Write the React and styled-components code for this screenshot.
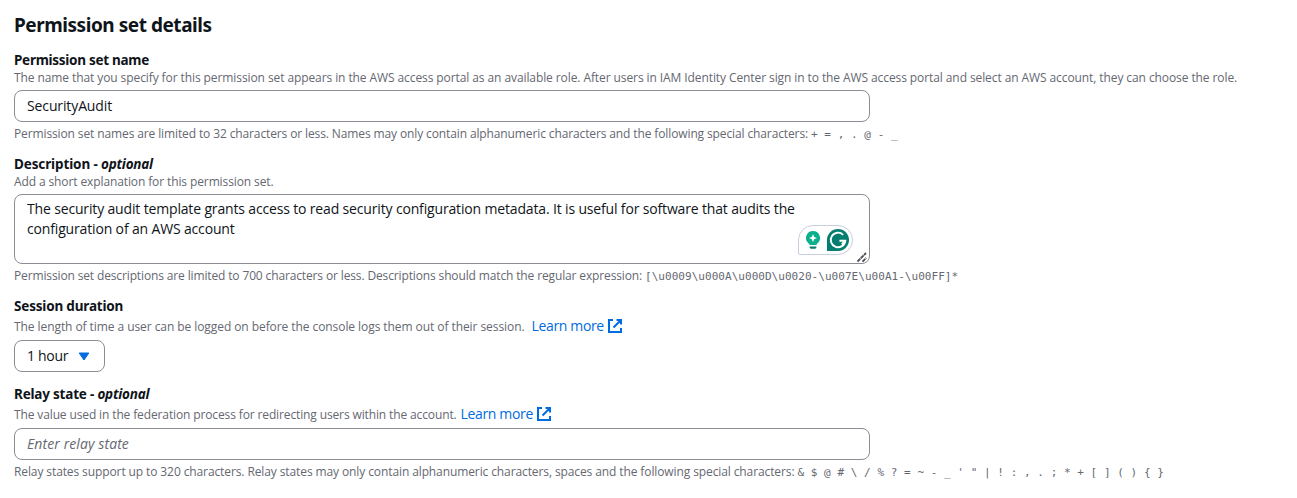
import React from 'react';
import styled, { createGlobalStyle } from 'styled-components';

const GlobalStyle = createGlobalStyle`
  *, *::before, *::after { box-sizing: border-box; }
  body {
    margin: 0;
    background: #fff;
    color: #0f141a;
    font-family: 'Open Sans', 'Noto Sans', sans-serif;
    font-size: 14px;
    line-height: 20px;
    overflow: hidden;
  }
`;

const Panel = styled.main`
  display: flex;
  flex-direction: column;
  gap: 12px;
  padding: 13px 14px 0;
  white-space: nowrap;
`;

const Heading = styled.h2`
  margin: 0;
  height: 25px;
  font: 700 19px/24px 'Noto Sans', sans-serif;
  letter-spacing: -0.46px;
`;

const Field = styled.section`
  display: flex;
  flex-direction: column;
  align-items: flex-start;
`;

const Label = styled.label`
  font: 700 13.5px/20px 'Noto Sans', sans-serif;
  letter-spacing: ${(p) => p.$track}px;
  white-space: pre;
`;

const Optional = styled.em`
  letter-spacing: -0.22px;
`;

const Hint = styled.div`
  display: flex;
  align-items: baseline;
  height: ${(p) => (p.$tall ? 20 : 16)}px;
  font-size: 12px;
  line-height: ${(p) => (p.$tall ? 20 : 16)}px;
  letter-spacing: ${(p) => p.$track}px;
  color: #656871;
`;

const Constraint = styled(Hint)`
  margin-top: 4px;
`;

const Code = styled.code`
  margin-left: 3px;
  font-family: 'DejaVu Sans Mono', monospace;
  font-size: 11px;
  letter-spacing: 0.04px;
`;

const Link = styled.a`
  display: inline-flex;
  align-items: baseline;
  margin-left: ${(p) => p.$gap}px;
  font-size: 14px;
  letter-spacing: -0.35px;
  color: #006ce0;
  text-decoration: none;

  svg {
    align-self: center;
    margin-left: 4px;
  }
`;

const Input = styled.input`
  width: 856px;
  height: 32px;
  margin-top: 4px;
  padding: 0 12px 2px;
  border: 1px solid #8c8c94;
  border-radius: 8px;
  outline: none;
  background: #fff;
  color: #0f141a;
  font: 14px/20px 'Open Sans', sans-serif;
  letter-spacing: -0.12px;

  &::placeholder {
    color: #656871;
    opacity: 1;
    font-style: italic;
    letter-spacing: 0.1px;
  }
`;

const AreaFrame = styled.div`
  position: relative;
  width: 856px;
  height: 70px;
  margin-top: 4px;
`;

const TextArea = styled.textarea`
  display: block;
  width: 100%;
  height: 100%;
  padding: 4px 12px;
  border: 1px solid #8c8c94;
  border-radius: 8px;
  outline: none;
  resize: none;
  overflow: hidden;
  background: #fff;
  color: #0f141a;
  font: 14px/20px 'Open Sans', sans-serif;
  letter-spacing: -0.157px;
`;

const Assistant = styled.div`
  position: absolute;
  right: 17px;
  bottom: 9px;
  display: flex;
  align-items: center;
  gap: 6px;
  width: 55px;
  height: 30px;
  padding-left: 6px;
  border: 1px solid #c9cedd;
  border-radius: 15px 15px 15px 2px;
  background: #fff;
`;

const Grip = styled.svg`
  position: absolute;
  right: 2px;
  bottom: 1px;
`;

const Select = styled.button`
  display: flex;
  align-items: center;
  gap: 10px;
  width: 91px;
  height: 32px;
  margin-top: 4px;
  padding: 0 12px;
  border: 1px solid #8c8c94;
  border-radius: 8px;
  background: #fff;
  color: #0f141a;
  font: 14px/20px 'Open Sans', sans-serif;
  letter-spacing: -0.3px;
`;

const ExternalIcon = () => (
  <svg width="14" height="14" viewBox="0 0 14 14" fill="none" stroke="#006ce0" strokeWidth="2">
    <path d="M5 1H1V13H13V9M8.5 1H13V5.5M13 1L5.5 8.5" />
  </svg>
);

const BulbIcon = () => (
  <svg width="16" height="20" viewBox="0 0 16 20">
    <path
      d="M8 1a7 7 0 0 0-4.8 12.1c.8.7 1.2 1.2 1.5 1.9h6.6c.3-.7.7-1.2 1.5-1.9A7 7 0 0 0 8 1Z"
      fill="#0ab08c"
    />
    <path d="M8 4.1 9.2 6.9 12 8.1 9.2 9.3 8 12.1 6.8 9.3 4 8.1 6.8 6.9Z" fill="#fff" />
    <path d="M4.4 16.4h7.2c-.1 1.6-.9 2.4-2.3 2.4H6.7c-1.4 0-2.2-.8-2.3-2.4Z" fill="#087f6e" />
  </svg>
);

const GrammarIcon = () => (
  <svg width="22" height="22" viewBox="0 0 22 22">
    <path d="M11 0a11 11 0 1 1 0 22H0V11A11 11 0 0 1 11 0Z" fill="#027e6f" />
    <path
      d="M16.2 5.8A7.3 7.3 0 1 0 18.3 11.8H12.4M17.7 11.8L15 15.3"
      fill="none"
      stroke="#fff"
      strokeWidth="1.9"
    />
  </svg>
);

const description =
  'The security audit template grants access to read security configuration metadata. It is useful for software that audits the\nconfiguration of an AWS account';

const LearnMore = ({ gap }) => (
  <Link $gap={gap}>
    Learn more
    <ExternalIcon />
  </Link>
);

export default function App() {
  return (
    <>
      <GlobalStyle />
      <Panel>
        <Heading>Permission set details</Heading>

        <Field>
          <Label $track={-0.28}>Permission set name</Label>
          <Hint $track={-0.09}>
            The name that you specify for this permission set appears in the AWS access portal as an available role.
            After users in IAM Identity Center sign in to the AWS access portal and select an AWS account, they can
            choose the role.
          </Hint>
          <Input defaultValue="SecurityAudit" spellCheck={false} />
          <Constraint $track={-0.119}>
            Permission set names are limited to 32 characters or less. Names may only contain alphanumeric characters
            and the following special characters:
            <Code>+ = , . @ - _</Code>
          </Constraint>
        </Field>

        <Field>
          <Label $track={-0.12}>
            Description - <Optional>optional</Optional>
          </Label>
          <Hint $track={-0.111}>Add a short explanation for this permission set.</Hint>
          <AreaFrame>
            <TextArea defaultValue={description} spellCheck={false} />
            <Assistant>
              <BulbIcon />
              <GrammarIcon />
            </Assistant>
            <Grip width="11" height="11" viewBox="0 0 11 11" fill="none" stroke="#4a4d54" strokeWidth="1.8">
              <path d="M0.5 9.5 9 1M5.5 9.7 9.2 6" strokeDasharray="4 0.6" />
            </Grip>
          </AreaFrame>
          <Constraint $track={-0.136}>
            Permission set descriptions are limited to 700 characters or less. Descriptions should match the regular
            expression:
            <Code>{'[\\u0009\\u000A\\u000D\\u0020-\\u007E\\u00A1-\\u00FF]*'}</Code>
          </Constraint>
        </Field>

        <Field>
          <Label $track={-0.18}>Session duration</Label>
          <Hint $tall $track={-0.071}>
            The length of time a user can be logged on before the console logs them out of their session.
            <LearnMore gap={7} />
          </Hint>
          <Select>
            1 hour
            <svg width="12" height="9" viewBox="0 0 12 9">
              <path d="M1.2 1h9.6L6 8Z" fill="#006ce0" stroke="#006ce0" strokeLinejoin="round" />
            </svg>
          </Select>
        </Field>

        <Field>
          <Label $track={-0.2}>
            Relay state - <Optional>optional</Optional>
          </Label>
          <Hint $tall $track={-0.127}>
            The value used in the federation process for redirecting users within the account.
            <LearnMore gap={4} />
          </Hint>
          <Input placeholder="Enter relay state" />
          <Constraint $track={-0.105}>
            Relay states support up to 320 characters. Relay states may only contain alphanumeric characters, spaces
            and the following special characters:
            <Code>{'& $ @ # \\ / % ? = ~ - _ \' " | ! : , . ; * + [ ] ( ) { }'}</Code>
          </Constraint>
        </Field>
      </Panel>
    </>
  );
}
